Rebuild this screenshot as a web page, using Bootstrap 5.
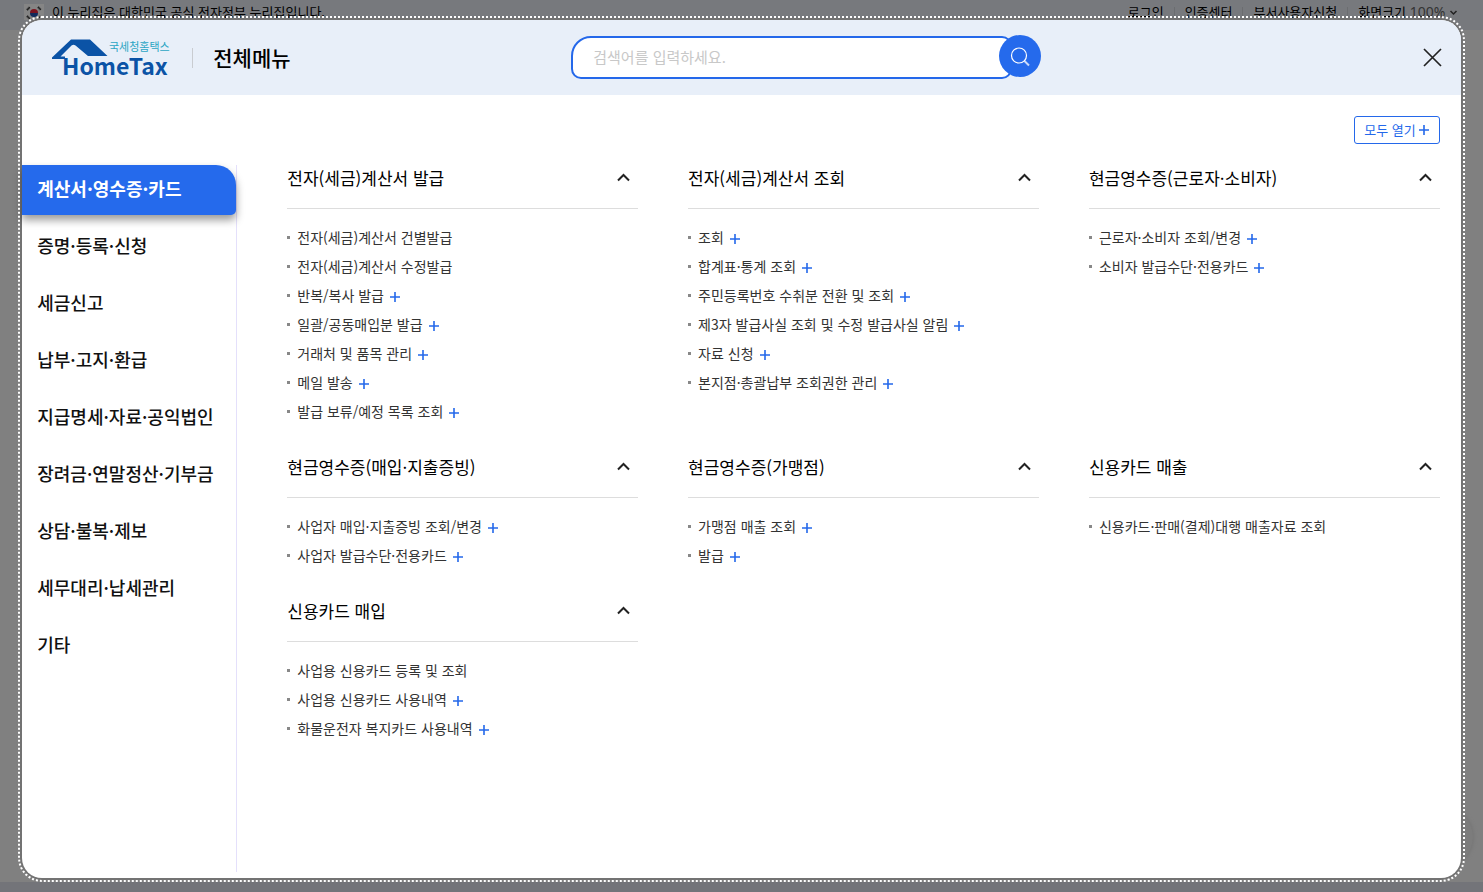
<!DOCTYPE html>
<html lang="ko">
<head>
<meta charset="utf-8">
<meta name="viewport" content="width=device-width, initial-scale=1">
<title>전체메뉴 - 홈택스</title>
<link href="https://cdn.jsdelivr.net/npm/bootstrap@5.3.0/dist/css/bootstrap.min.css" rel="stylesheet">
<style>
body{font-family:"Noto Sans CJK KR",sans-serif;font-size:14px;background:#808080;color:#333;min-height:100vh}
a{color:inherit;text-decoration:none}
button{font-family:inherit}
.gov-bar{height:30px;background:#77797d;color:#000;font-size:13px;line-height:24px;padding:0 25px 0 24px}
.gov-bar .flag{width:20px;height:16px}
.gov-links li+li::before{content:"";display:inline-block;width:1px;height:10px;background:#6b6d70;margin:0 10px}
.zoom-level{font-family:"Noto Sans",sans-serif;color:#333;background:none;border:0;padding:0;font-size:14px;line-height:24px}
.foot-bar{height:10px;background:#737479}
.quick-dot{width:60px;height:60px;right:10px;bottom:25px;background:#7c7c7c;box-shadow:0 0 4px #707070}
.sheet-wrap{position:absolute;inset:0;padding:20px 0 14px}
.sheet{width:97%;min-height:100%;border-radius:20px;background:#fff;outline:2px dotted #fff;outline-offset:2px;box-shadow:0 0 0 2px #737373}
.sheet-head{height:75px;background:#e8eff9;border-radius:20px 20px 0 0;padding:0 19px 0 30px}
.brand-side{width:519px}
.logo-rule{width:1px;height:20px;background:#c9ccd1;margin:0 20px}
.sheet-title{font-size:21px;font-weight:500;line-height:30px;color:#000;padding-bottom:2px}
.search{width:470px;height:43px}
.search input{width:441px;height:43px;border:2px solid #2468ea;border-radius:20px 10px 10px 10px;padding:0 20px 2px;font-size:15px;color:#333}
.search input::placeholder{color:#c8c8c8}
.search button{width:42px;height:42px;border:0;border-radius:50%;background:#256aec;margin:-1px 0 0 -13px}
.tool-row{padding:21px 21px 4px 20px}
.open-all{height:28px;border:1px solid #2468ea;border-radius:3px;background:#fff;color:#2468ea;font-size:13px;line-height:20px;padding:0 10px 0 9px;gap:3px}
.side{width:215px;margin:17px 0 6px;border-right:1px solid #e4e0fb}
.side a{height:50px;padding:0 15px 5px;font-size:18px;font-weight:500;color:#111;line-height:26px}
.side li{margin-bottom:7px}
.side a.active{background:#256aec;color:#fff;font-weight:700;border-radius:0 20px 5px 0;box-shadow:0 5px 8px rgba(0,0,0,.4)}
.groups{padding:0 21px 0 50px}
.groups .row{--bs-gutter-x:50px}
.group{margin-bottom:10px}
.group-head{height:61px;border-bottom:1px solid #ddd;padding-right:8px}
.group-head h2{font-size:17px;font-weight:400;line-height:26px;color:#000;margin:0}
.group-head button{margin-bottom:2px}
.group ul{padding-top:15px}
.group li{height:29px;line-height:27px}
.group li a{padding-bottom:2px}
.group li::before{content:"";width:3px;height:3px;background:#888;margin-right:7px;margin-top:-2px}
.icon-btn{background:none;border:0;padding:0;line-height:0}
.more{margin:1px 0 0 6px}
</style>
</head>
<body class="d-flex flex-column justify-content-between position-relative">
<div class="gov-bar d-flex justify-content-between align-items-start">
  <div class="d-flex">
    <svg class="flag mt-1" viewBox="0 0 20 16" aria-hidden="true"><path fill="#858585" d="M0 0h20v16H0z"/><path fill="#7a1420" d="M6 9a4 4 0 0 1 8 0z"/><path fill="#112a5c" d="M6 9a4 4 0 0 0 8 0z"/><path stroke="#111" stroke-width="2" stroke-dasharray="1 .4" d="M3 6l3-3M14 3l3 3M3 12l3 3M14 15l3-3"/></svg>
    <span class="ms-2">이 누리집은 대한민국 공식 전자정부 누리집입니다.</span>
  </div>
  <ul class="gov-links list-unstyled d-flex mb-0">
    <li><a href="#">로그인</a></li><li><a href="#">인증센터</a></li><li><a href="#">부서사용자신청</a></li>
    <li>화면크기 <button class="zoom-level" type="button">100% <svg width="9" height="6" viewBox="0 0 8 6" fill="none" stroke="#222" stroke-width="1.5" aria-hidden="true"><path d="M1 1l3 3 3-3"/></svg></button></li>
  </ul>
</div>
<div class="quick-dot position-absolute rounded-circle"></div>
<div class="foot-bar"></div>

<div class="sheet-wrap d-flex justify-content-center">
<div class="sheet d-flex flex-column" role="dialog" aria-labelledby="sheetTitle">
  <header class="sheet-head d-flex align-items-center">
    <div class="brand-side d-flex align-items-center flex-shrink-0">
      <a href="#" aria-label="HomeTax"><svg class="d-block" width="120" height="38" viewBox="0 0 120 38">
        <path fill="#0b53a6" d="M0 18.500L19 .5h19L55.500 17H36L23.500 6.500Q21.500 5 19.500 6.500L8.500 17.500H13V20H0z"/>
        <text x="57" y="12" font-size="11" fill="#2ba6c4">국세청홈택스</text>
        <text x="10" y="36" font-size="23" font-weight="700" fill="#0b53a6">HomeTax</text></svg></a>
      <span class="logo-rule"></span>
      <h1 class="sheet-title mb-0" id="sheetTitle">전체메뉴</h1>
    </div>
    <form class="search d-flex" role="search">
      <input type="text" placeholder="검색어를 입력하세요." aria-label="검색어">
      <button type="submit" class="flex-shrink-0 p-0" aria-label="검색"><svg width="20" height="20" viewBox="0 0 20 20" fill="none" stroke="#fff" stroke-width="1.2"><circle cx="9" cy="8.500" r="7.500"/><path stroke-width="2" stroke-opacity=".75" d="M14.500 14l4.500 4.500"/></svg></button>
    </form>
    <button type="button" class="icon-btn ms-auto" aria-label="닫기"><svg width="19" height="19" viewBox="0 0 19 19" stroke="#222" stroke-width="1.7"><path d="M1 1l17 17M18 1L1 18"/></svg></button>
  </header>
  <div class="tool-row d-flex justify-content-end">
    <button type="button" class="open-all d-flex align-items-center">모두 열기 <svg width="10" height="10" viewBox="0 0 10 10" stroke="#2468ea" stroke-width="1.600"><path d="M5 0v10M0 5h10"/></svg></button>
  </div>
  <div class="d-flex flex-grow-1">
    <nav class="side flex-shrink-0" aria-label="전체메뉴">
      <ul class="list-unstyled mb-0">
        <li><a href="#" class="active d-flex align-items-center">계산서·영수증·카드</a></li>
        <li><a href="#" class="d-flex align-items-center">증명·등록·신청</a></li>
        <li><a href="#" class="d-flex align-items-center">세금신고</a></li>
        <li><a href="#" class="d-flex align-items-center">납부·고지·환급</a></li>
        <li><a href="#" class="d-flex align-items-center">지급명세·자료·공익법인</a></li>
        <li><a href="#" class="d-flex align-items-center">장려금·연말정산·기부금</a></li>
        <li><a href="#" class="d-flex align-items-center">상담·불복·제보</a></li>
        <li><a href="#" class="d-flex align-items-center">세무대리·납세관리</a></li>
        <li><a href="#" class="d-flex align-items-center">기타</a></li>
      </ul>
    </nav>
    <main class="groups flex-grow-1"><div class="row" id="groups"></div></main>
  </div>
</div>
</div>
<script src="https://cdn.jsdelivr.net/npm/bootstrap@5.3.0/dist/js/bootstrap.bundle.min.js"></script>
<script>
// A trailing "+" marks an entry that has a submenu.
const groups = [
 ["전자(세금)계산서 발급", ["전자(세금)계산서 건별발급","전자(세금)계산서 수정발급","반복/복사 발급+","일괄/공동매입분 발급+","거래처 및 품목 관리+","메일 발송+","발급 보류/예정 목록 조회+"]],
 ["전자(세금)계산서 조회", ["조회+","합계표·통계 조회+","주민등록번호 수취분 전환 및 조회+","제3자 발급사실 조회 및 수정 발급사실 알림+","자료 신청+","본지점·총괄납부 조회권한 관리+"]],
 ["현금영수증(근로자·소비자)", ["근로자·소비자 조회/변경+","소비자 발급수단·전용카드+"]],
 ["현금영수증(매입·지출증빙)", ["사업자 매입·지출증빙 조회/변경+","사업자 발급수단·전용카드+"]],
 ["현금영수증(가맹점)", ["가맹점 매출 조회+","발급+"]],
 ["신용카드 매출", ["신용카드·판매(결제)대행 매출자료 조회"]],
 ["신용카드 매입", ["사업용 신용카드 등록 및 조회","사업용 신용카드 사용내역+","화물운전자 복지카드 사용내역+"]]
];
const plus = '<button type="button" class="icon-btn more" aria-label="하위메뉴 열기"><svg width="10" height="10" viewBox="0 0 10 10" stroke="#2468ea" stroke-width="1.600"><path d="M5 0v10M0 5h10"/></svg></button>';
const item = t => `<li class="d-flex align-items-center"><a href="#">${t.replace("+","")}</a>${t.endsWith("+") ? plus : ""}</li>`;
document.getElementById("groups").innerHTML = groups.map(([title, items]) => `
<section class="col-4"><div class="group">
  <div class="group-head d-flex align-items-center justify-content-between"><h2>${title}</h2>
    <button type="button" class="icon-btn" aria-label="접기"><svg width="13" height="9" viewBox="0 0 13 9" fill="none" stroke="#222" stroke-width="2"><path d="M1 7.500l5.500-5.500 5.500 5.500"/></svg></button></div>
  <ul class="list-unstyled mb-0">${items.map(item).join("")}</ul>
</div></section>`).join("");
</script>
</body>
</html>
